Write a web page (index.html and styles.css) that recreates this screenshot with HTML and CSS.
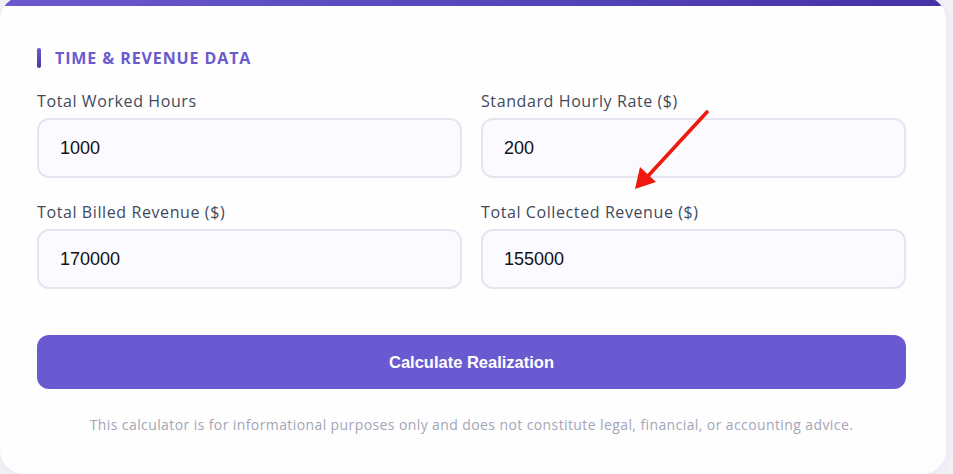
FILE: index.html
```html
<!DOCTYPE html>
<html lang="en">
<head>
<meta charset="utf-8">
<title>Realization Calculator</title>
<link rel="stylesheet" href="styles.css">
</head>
<body>
<div class="page">
  <section class="card">
    <div class="card-bar"></div>
    <div class="card-body">
      <h2 class="section-title">Time &amp; Revenue Data</h2>
      <div class="grid">
        <div class="field">
          <label class="field-label" for="hours">Total Worked Hours</label>
          <input class="field-input" id="hours" type="text" value="1000">
        </div>
        <div class="field">
          <label class="field-label" for="rate">Standard Hourly Rate ($)</label>
          <input class="field-input" id="rate" type="text" value="200">
        </div>
        <div class="field">
          <label class="field-label" for="billed">Total Billed Revenue ($)</label>
          <input class="field-input" id="billed" type="text" value="170000">
        </div>
        <div class="field">
          <label class="field-label" for="collected">Total Collected Revenue ($)</label>
          <input class="field-input" id="collected" type="text" value="155000">
        </div>
      </div>
      <button class="btn" type="button">Calculate Realization</button>
      <p class="disclaimer">This calculator is for informational purposes only and does not constitute legal, financial, or accounting advice.</p>
    </div>
  </section>
  <svg class="annotation" width="953" height="474" viewBox="0 0 953 474" aria-hidden="true">
    <line x1="707" y1="116" x2="648" y2="180" stroke="#f0190d" stroke-width="3.6" stroke-linecap="round"/>
    <polygon points="635,193 640,171 656,186" fill="#f0190d"/>
  </svg>
</div>
</body>
</html>
```

FILE: styles.css
```css
* { box-sizing: border-box; }
html, body { margin: 0; padding: 0; }
body {
  background: #f2f1f6;
  font-family: "Open Sans", "Noto Sans", sans-serif;
  width: 953px;
  height: 474px;
  overflow: hidden;
}
.page {
  position: relative;
  width: 953px;
  height: 474px;
}
.card {
  width: 946px;
  margin-top: -4px;
  background: #fefeff;
  border-radius: 24px;
  overflow: hidden;
  box-shadow: 0 2px 10px rgba(80, 70, 140, 0.06);
}
.card-bar {
  height: 10px;
  background: linear-gradient(90deg, #6a5acd 0%, #5747bd 50%, #4433a6 100%);
}
.card-body {
  padding: 42px 40px 39px 37px;
}
.section-title {
  display: flex;
  align-items: center;
  gap: 14px;
  margin: 0 0 21px;
  height: 20px;
  font-size: 16px;
  font-weight: 700;
  letter-spacing: 0.9px;
  text-transform: uppercase;
  color: #6a5acd;
}
.section-title::before {
  content: "";
  width: 4px;
  height: 20px;
  border-radius: 2px;
  background: linear-gradient(180deg, #6a5acd, #44379e);
}
.grid {
  display: grid;
  grid-template-columns: 1fr 1fr;
  column-gap: 19px;
  row-gap: 22px;
}
.field {
  display: flex;
  flex-direction: column;
  gap: 5px;
}
.field-label {
  font-size: 16px;
  line-height: 24px;
  font-weight: 500;
  letter-spacing: 0.6px;
  color: #414a5b;
}
.field-input {
  width: 100%;
  height: 60px;
  border: 2px solid #e4e5f1;
  border-radius: 12px;
  background: #fbfafe;
  padding: 0 21px;
  font-family: "Liberation Sans", Arial, sans-serif;
  font-size: 18px;
  color: #111118;
  outline: none;
}
.btn {
  display: block;
  width: 100%;
  height: 54px;
  margin-top: 46px;
  border: 0;
  border-radius: 12px;
  background: #6a5ad2;
  color: #ffffff;
  font-family: "Liberation Sans", Arial, sans-serif;
  font-size: 16.5px;
  font-weight: 700;
}
.disclaimer {
  margin: 25px 0 0;
  text-align: center;
  font-size: 14px;
  line-height: 21px;
  letter-spacing: 0.4px;
  color: #a3a6b6;
}
.annotation {
  position: absolute;
  left: 0;
  top: 0;
  pointer-events: none;
}
```
